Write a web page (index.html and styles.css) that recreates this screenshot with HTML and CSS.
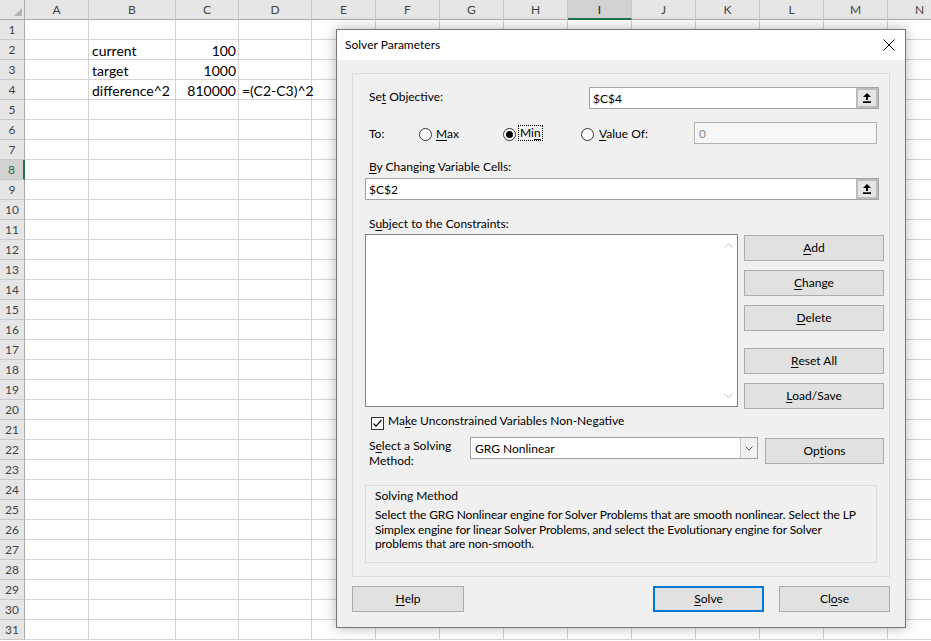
FILE: index.html
```html
<!DOCTYPE html>
<html>
<head>
<meta charset="utf-8">
<link rel="stylesheet" href="styles.css">
</head>
<body>
<div class="sheet">
<div class="corner"><svg width="25" height="20" viewBox="0 0 25 20"><path d="M22 8V16H14Z" fill="#b4b4b4"/></svg></div><div>A</div><div>B</div><div>C</div><div>D</div><div>E</div><div>F</div><div>G</div><div>H</div><div class="sel-c">I</div><div>J</div><div>K</div><div>L</div><div>M</div><div>N</div>
<div>1</div><div></div><div></div><div></div><div></div><div></div><div></div><div></div><div></div><div></div><div></div><div></div><div></div><div></div><div></div>
<div>2</div><div></div><div class="t">current</div><div class="t n">100</div><div></div><div></div><div></div><div></div><div></div><div></div><div></div><div></div><div></div><div></div><div></div>
<div>3</div><div></div><div class="t">target</div><div class="t n">1000</div><div></div><div></div><div></div><div></div><div></div><div></div><div></div><div></div><div></div><div></div><div></div>
<div>4</div><div></div><div class="t">difference^2</div><div class="t n">810000</div><div class="t">=(C2-C3)^2</div><div></div><div></div><div></div><div></div><div></div><div></div><div></div><div></div><div></div><div></div>
<div>5</div><div></div><div></div><div></div><div></div><div></div><div></div><div></div><div></div><div></div><div></div><div></div><div></div><div></div><div></div>
<div>6</div><div></div><div></div><div></div><div></div><div></div><div></div><div></div><div></div><div></div><div></div><div></div><div></div><div></div><div></div>
<div>7</div><div></div><div></div><div></div><div></div><div></div><div></div><div></div><div></div><div></div><div></div><div></div><div></div><div></div><div></div>
<div class="sel-r">8</div><div></div><div></div><div></div><div></div><div></div><div></div><div></div><div></div><div></div><div></div><div></div><div></div><div></div><div></div>
<div>9</div><div></div><div></div><div></div><div></div><div></div><div></div><div></div><div></div><div></div><div></div><div></div><div></div><div></div><div></div>
<div>10</div><div></div><div></div><div></div><div></div><div></div><div></div><div></div><div></div><div></div><div></div><div></div><div></div><div></div><div></div>
<div>11</div><div></div><div></div><div></div><div></div><div></div><div></div><div></div><div></div><div></div><div></div><div></div><div></div><div></div><div></div>
<div>12</div><div></div><div></div><div></div><div></div><div></div><div></div><div></div><div></div><div></div><div></div><div></div><div></div><div></div><div></div>
<div>13</div><div></div><div></div><div></div><div></div><div></div><div></div><div></div><div></div><div></div><div></div><div></div><div></div><div></div><div></div>
<div>14</div><div></div><div></div><div></div><div></div><div></div><div></div><div></div><div></div><div></div><div></div><div></div><div></div><div></div><div></div>
<div>15</div><div></div><div></div><div></div><div></div><div></div><div></div><div></div><div></div><div></div><div></div><div></div><div></div><div></div><div></div>
<div>16</div><div></div><div></div><div></div><div></div><div></div><div></div><div></div><div></div><div></div><div></div><div></div><div></div><div></div><div></div>
<div>17</div><div></div><div></div><div></div><div></div><div></div><div></div><div></div><div></div><div></div><div></div><div></div><div></div><div></div><div></div>
<div>18</div><div></div><div></div><div></div><div></div><div></div><div></div><div></div><div></div><div></div><div></div><div></div><div></div><div></div><div></div>
<div>19</div><div></div><div></div><div></div><div></div><div></div><div></div><div></div><div></div><div></div><div></div><div></div><div></div><div></div><div></div>
<div>20</div><div></div><div></div><div></div><div></div><div></div><div></div><div></div><div></div><div></div><div></div><div></div><div></div><div></div><div></div>
<div>21</div><div></div><div></div><div></div><div></div><div></div><div></div><div></div><div></div><div></div><div></div><div></div><div></div><div></div><div></div>
<div>22</div><div></div><div></div><div></div><div></div><div></div><div></div><div></div><div></div><div></div><div></div><div></div><div></div><div></div><div></div>
<div>23</div><div></div><div></div><div></div><div></div><div></div><div></div><div></div><div></div><div></div><div></div><div></div><div></div><div></div><div></div>
<div>24</div><div></div><div></div><div></div><div></div><div></div><div></div><div></div><div></div><div></div><div></div><div></div><div></div><div></div><div></div>
<div>25</div><div></div><div></div><div></div><div></div><div></div><div></div><div></div><div></div><div></div><div></div><div></div><div></div><div></div><div></div>
<div>26</div><div></div><div></div><div></div><div></div><div></div><div></div><div></div><div></div><div></div><div></div><div></div><div></div><div></div><div></div>
<div>27</div><div></div><div></div><div></div><div></div><div></div><div></div><div></div><div></div><div></div><div></div><div></div><div></div><div></div><div></div>
<div>28</div><div></div><div></div><div></div><div></div><div></div><div></div><div></div><div></div><div></div><div></div><div></div><div></div><div></div><div></div>
<div>29</div><div></div><div></div><div></div><div></div><div></div><div></div><div></div><div></div><div></div><div></div><div></div><div></div><div></div><div></div>
<div>30</div><div></div><div></div><div></div><div></div><div></div><div></div><div></div><div></div><div></div><div></div><div></div><div></div><div></div><div></div>
<div>31</div><div></div><div></div><div></div><div></div><div></div><div></div><div></div><div></div><div></div><div></div><div></div><div></div><div></div><div></div>
</div>

<div class="dialog">
  <div class="titlebar">
    <span class="title">Solver Parameters</span>
    <svg class="close" width="12" height="12" viewBox="0 0 12 12"><path d="M0.5 0.5L11.5 11.5M11.5 0.5L0.5 11.5" stroke="#000" stroke-width="1"/></svg>
  </div>
  <div class="dbody">
    <div class="panel">
      <div class="row objective">
        <span class="lbl up">Se<u>t</u> Objective:</span>
        <div class="field obj-field"><span class="val">$C$4</span><span class="refbtn"><svg width="8" height="10" viewBox="0 0 8 10"><path d="M4 0L8 4H5V7H3V4H0Z" fill="#000"/><rect x="0" y="8.3" width="8" height="1.7" fill="#000"/></svg></span></div>
      </div>
      <div class="row to-row">
        <span class="lbl to-lbl">To:</span>
        <span class="radio r-max"><span class="circle"></span><span class="rtext"><u>M</u>ax</span></span>
        <span class="radio r-min"><span class="circle on"></span><span class="rtext focus">Mi<u>n</u></span></span>
        <span class="radio r-val"><span class="circle"></span><span class="rtext"><u>V</u>alue Of:</span></span>
        <div class="field disabled">0</div>
      </div>
      <div class="lbl caption by-lbl"><u>B</u>y Changing Variable Cells:</div>
      <div class="field var-field"><span class="val">$C$2</span><span class="refbtn"><svg width="8" height="10" viewBox="0 0 8 10"><path d="M4 0L8 4H5V7H3V4H0Z" fill="#000"/><rect x="0" y="8.3" width="8" height="1.7" fill="#000"/></svg></span></div>
      <div class="lbl caption sub-lbl">S<u>u</u>bject to the Constraints:</div>
      <div class="constraints">
        <div class="listbox">
          <div class="vscroll">
            <svg width="9" height="5" viewBox="0 0 9 5"><path d="M0.5 4.5L4.5 0.5L8.5 4.5" fill="none" stroke="#c2c2c2"/></svg>
            <svg width="9" height="5" viewBox="0 0 9 5"><path d="M0.5 0.5L4.5 4.5L8.5 0.5" fill="none" stroke="#c2c2c2"/></svg>
          </div>
        </div>
        <div class="btncol">
          <div class="btn"><u>A</u>dd</div>
          <div class="btn"><u>C</u>hange</div>
          <div class="btn"><u>D</u>elete</div>
          <div class="btn reset"><u>R</u>eset All</div>
          <div class="btn"><u>L</u>oad/Save</div>
        </div>
      </div>
      <div class="checkrow">
        <svg class="checkbox" width="13" height="13" viewBox="0 0 13 13"><rect x="0.5" y="0.5" width="12" height="12" fill="#fff" stroke="#333"/><path d="M2.5 6.5L5 9.2L10.5 3" fill="none" stroke="#000" stroke-width="1.2"/></svg>
        <span class="checklbl">Ma<u>k</u>e Unconstrained Variables Non-Negative</span>
      </div>
      <div class="method-row">
        <div class="lbl method-lbl"><span>S<u>e</u>lect a Solving</span><span>Method:</span></div>
        <div class="combo">
          <span class="combo-val">GRG Nonlinear</span>
          <span class="combo-arrow"><svg width="8" height="5" viewBox="0 0 8 5"><path d="M0.5 0.5L4 4L7.5 0.5" fill="none" stroke="#606060"/></svg></span>
        </div>
        <div class="btn options">Op<u>t</u>ions</div>
      </div>
      <div class="group">
        <div class="group-title">Solving Method</div>
        <div class="group-desc">
          <span>Select the GRG Nonlinear engine for Solver Problems that are smooth nonlinear. Select the LP</span>
          <span>Simplex engine for linear Solver Problems, and select the Evolutionary engine for Solver</span>
          <span>problems that are non-smooth.</span>
        </div>
      </div>
    </div>
    <div class="footer">
      <div class="btn help"><u>H</u>elp</div>
      <div class="btn solve"><u>S</u>olve</div>
      <div class="btn closebtn">Cl<u>o</u>se</div>
    </div>
  </div>
</div>
</body>
</html>
```

FILE: styles.css
```css
* { box-sizing: border-box; }
html, body { margin: 0; height: 100%; overflow: hidden; background: #fff; }
body { position: relative; font-family: Lato, "Liberation Sans", sans-serif; }

/* ---------- spreadsheet ---------- */
.sheet {
  display: grid;
  grid-template-columns: 25px 64px 87px 63px 73px repeat(10, 64px);
  grid-auto-rows: 20px;
  font-size: 14px;
  color: #000;
}
.sheet > div {
  border-right: 1px solid #d4d4d4;
  border-bottom: 1px solid #d4d4d4;
  line-height: 19px;
  padding: 0 2px 0 3px;
  white-space: nowrap;
  overflow: hidden;
}
.sheet > div.t { padding-top: 1px; overflow: visible; }
.sheet > div.n { text-align: right; padding-right: 2px; }

.sheet > div:nth-child(-n+15),
.sheet > div:nth-child(15n+1) {
  background: #e6e6e6;
  color: #444;
  font-size: 12px;
  text-align: center;
  padding: 0;
  line-height: 19px;
  border-right-color: #c8c8c8;
  border-bottom-color: #c8c8c8;
}
.sheet > div:nth-child(-n+15) { border-bottom-color: #ababab; }
.sheet > div:nth-child(15n+1) { border-right-color: #ababab; }
.sheet > div.corner { padding: 0; line-height: 0; }
.sheet > div.sel-c {
  background: #d2d2d2;
  border-bottom: 2px solid #217346;
  color: #262626;
}
.sheet > div.sel-r {
  background: #d2d2d2;
  border-right: 2px solid #217346;
  color: #217346;
}

/* ---------- dialog ---------- */
.dialog {
  position: absolute;
  left: 336px;
  top: 29px;
  width: 570px;
  height: 599px;
  border: 1px solid #777;
  background: #f0f0f0;
  box-shadow: 0 0 12px rgba(0, 0, 0, 0.3);
  font-size: 12px;
  color: #000;
  display: flex;
  flex-direction: column;
}
.titlebar {
  height: 30px;
  flex: none;
  background: #fff;
  display: flex;
  align-items: center;
  justify-content: space-between;
  padding-left: 8px;
  padding-bottom: 2px;
}
.title { font-size: 12px; }
.close { margin-right: 10px; margin-top: 2px; }

.dbody {
  flex: 1;
  padding: 13px 15px 0 15px;
  display: flex;
  flex-direction: column;
}
.panel {
  height: 504px;
  flex: none;
  border: 1px solid #dcdcdc;
  padding: 13px 5px 0 12px;
  display: flex;
  flex-direction: column;
}
.row { display: flex; align-items: center; }
.lbl { padding-left: 4px; }
.up { margin-top: -3px; }
u { text-decoration-thickness: 1px; text-underline-offset: 2px; }

.field {
  height: 22px;
  background: #fff;
  border: 1px solid #a3a3a3;
  display: flex;
  align-items: center;
  padding-left: 3px;
}
.val { flex: 1; }
.refbtn {
  width: 22px;
  height: 20px;
  align-self: flex-start;
  background: #e5e5e5;
  border: 2px solid #bdbdbd;
  display: flex;
  align-items: center;
  justify-content: center;
}

.objective { height: 22px; }
.obj-field { margin-left: auto; width: 290px; margin-right: 5px; }

.to-row { height: 22px; margin-top: 13px; }
.to-lbl { width: 54px; }
.radio { display: flex; align-items: center; }
.circle {
  width: 13px;
  height: 13px;
  border: 1px solid #333;
  border-radius: 50%;
  background: #fff;
  display: flex;
  align-items: center;
  justify-content: center;
  margin-top: 2px;
}
.circle.on::after {
  content: "";
  width: 7px;
  height: 7px;
  border-radius: 50%;
  background: #000;
}
.rtext { margin-left: 4px; }
.r-max { width: 84px; }
.r-min { width: 78px; }
.r-min .rtext { margin-left: 2px; border: 1px dotted #000; padding: 0 1px; line-height: 14px; }
.r-val .rtext { margin-left: 5px; }
.disabled {
  margin-left: auto;
  width: 183px;
  margin-right: 7px;
  background: #f7f7f7;
  border-color: #b3b3b3;
  color: #8a8a8a;
  padding-left: 4px;
}

.caption { line-height: 15px; }
.by-lbl { margin-top: 15px; margin-bottom: 1px; }
.var-field { margin-top: 3px; width: 514px; }
.sub-lbl { margin-top: 16px; }

.constraints { display: flex; margin-top: 3px; }
.listbox {
  width: 373px;
  height: 173px;
  background: #fff;
  border: 1px solid #828282;
  display: flex;
  justify-content: flex-end;
}
.vscroll {
  width: 17px;
  display: flex;
  flex-direction: column;
  justify-content: space-between;
  align-items: center;
  padding: 8px 0 8px 0;
}
.btncol {
  margin-left: 6px;
  margin-top: 1px;
  width: 140px;
  display: flex;
  flex-direction: column;
  gap: 9px;
}
.btn {
  height: 26px;
  background: #e1e1e1;
  border: 1px solid #adadad;
  display: flex;
  align-items: center;
  justify-content: center;
  flex: none;
  padding-bottom: 1px;
}
.btn.reset { margin-top: 8px; }

.checkrow { display: flex; align-items: flex-start; margin-top: 6px; height: 15px; }
.checkbox { margin-left: 6px; margin-top: 2px; flex: none; }
.checklbl { margin-left: 4px; line-height: 13px; margin-top: -1px; }

.method-row { display: flex; align-items: flex-start; margin-top: 7px; height: 29px; }
.method-lbl { width: 105px; padding-top: 2px; display: flex; flex-direction: column; line-height: 14.5px; }
.combo {
  width: 288px;
  height: 22px;
  background: #fff;
  border: 1px solid #a3a3a3;
  display: flex;
  align-items: center;
  padding-left: 4px;
}
.combo-val { flex: 1; }
.combo-arrow {
  width: 17px;
  height: 100%;
  border-left: 1px solid #c2c2c2;
  background: #f2f2f2;
  display: flex;
  align-items: center;
  justify-content: center;
}
.options { width: 119px; margin-left: 7px; margin-top: 1px; }

.group {
  margin-top: 19px;
  width: 512px;
  height: 78px;
  border: 1px solid #dcdcdc;
  padding: 3px 0 0 9px;
  line-height: 14px;
}
.group-desc {
  margin-top: 5px;
  display: flex;
  flex-direction: column;
  white-space: nowrap;
  letter-spacing: -0.12px;
  line-height: 14.5px;
}

.footer { display: flex; margin-top: 9px; }
.help { width: 112px; }
.solve { width: 111px; margin-left: auto; border: 2px solid #0078d7; }
.closebtn { width: 111px; margin-left: 15px; }
```
